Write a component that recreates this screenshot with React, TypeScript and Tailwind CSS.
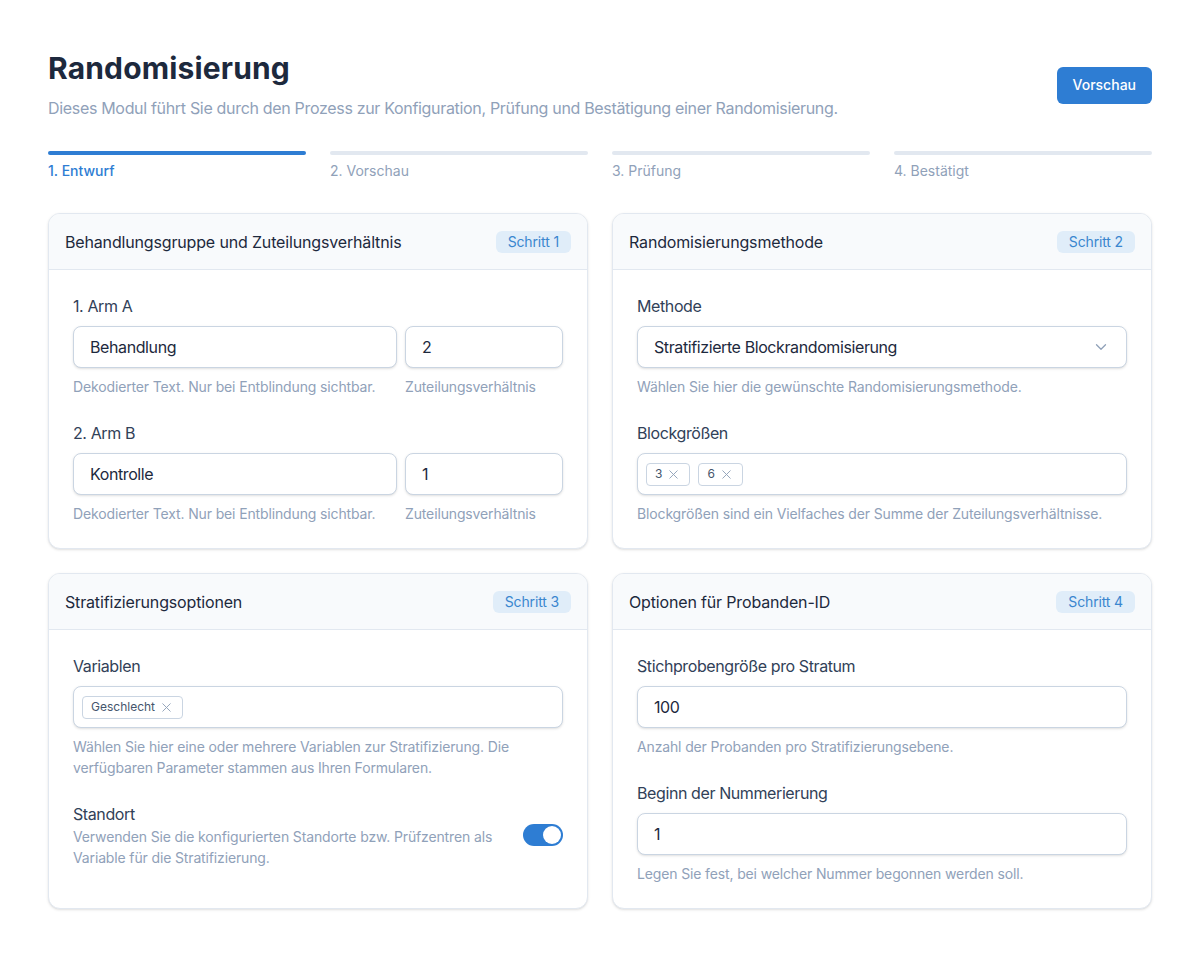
import React from 'react';
import { ChevronDown, X } from 'lucide-react';

const steps = ['1. Entwurf', '2. Vorschau', '3. Prüfung', '4. Bestätigt'];

const Card: React.FC<{ title: string; step: number; children: React.ReactNode }> = ({ title, step, children }) => (
  <div className="bg-white rounded-xl border border-slate-200 shadow-sm overflow-hidden">
    <div className="h-14 px-4 flex items-center justify-between bg-slate-50 border-b border-slate-200">
      <h2 className="text-base tracking-[-0.01em] text-slate-800">{title}</h2>
      <span className="px-3 h-[22px] flex items-center rounded-md bg-[#e0edf9] text-[#3a86cf] text-sm tracking-[-0.01em]">
        Schritt {step}
      </span>
    </div>
    <div className="px-6 pt-6 pb-6">{children}</div>
  </div>
);

const Label: React.FC<{ children: React.ReactNode; first?: boolean }> = ({ children, first }) => (
  <div className={`text-base leading-6 text-slate-700 ${first ? '' : 'mt-6'}`}>{children}</div>
);

const Help: React.FC<{ children: React.ReactNode }> = ({ children }) => (
  <p className="mt-2 text-sm leading-[21px] tracking-[-0.01em] text-slate-400">{children}</p>
);

const Field: React.FC<{ value: string; className?: string }> = ({ value, className = '' }) => (
  <div className={`h-[42px] px-4 flex items-center rounded-lg border border-slate-300 bg-white shadow-sm text-base text-slate-800 ${className}`}>
    {value}
  </div>
);

const Tag: React.FC<{ label: string }> = ({ label }) => (
  <span className="h-[23px] px-2 flex items-center gap-1 rounded border border-slate-300 bg-white text-xs tracking-normal text-slate-600">
    {label}
    <X size={15} strokeWidth={1.5} className="text-slate-400" />
  </span>
);

export default function App() {
  return (
    <div className="min-h-screen bg-white px-12 pt-[50px] pb-12 font-['Inter',sans-serif] tracking-[-0.025em]">
      <div className="flex items-center justify-between">
        <div>
          <h1 className="text-[30px] leading-9 font-bold tracking-[0.005em] text-slate-800">Randomisierung</h1>
          <p className="mt-2.5 text-base leading-6 tracking-[-0.02em] text-slate-400">
            Dieses Modul führt Sie durch den Prozess zur Konfiguration, Prüfung und Bestätigung einer Randomisierung.
          </p>
        </div>
        <button className="h-[37px] px-4 rounded-md bg-[#2e7dd3] text-white text-sm font-medium tracking-normal">Vorschau</button>
      </div>

      <div className="mt-[31px] grid grid-cols-4 gap-6">
        {steps.map((s, i) => (
          <div key={s}>
            <div className={`h-1 rounded-full ${i === 0 ? 'bg-[#2e7dd3]' : 'bg-slate-200'}`} />
            <div className={`mt-1.5 text-sm leading-5 tracking-normal ${i === 0 ? 'text-[#2e7dd3] font-medium' : 'text-slate-400'}`}>{s}</div>
          </div>
        ))}
      </div>

      <div className="mt-8 grid grid-cols-2 gap-6">
        <Card title="Behandlungsgruppe und Zuteilungsverhältnis" step={1}>
          {[['1. Arm A', 'Behandlung', '2'], ['2. Arm B', 'Kontrolle', '1']].map(([l, v, r], i) => (
            <div key={l}>
              <Label first={i === 0}>{l}</Label>
              <div className="mt-2 flex gap-2">
                <div className="flex-1">
                  <Field value={v} />
                  <Help>Dekodierter Text. Nur bei Entblindung sichtbar.</Help>
                </div>
                <div className="w-[158px]">
                  <Field value={r} />
                  <Help>Zuteilungsverhältnis</Help>
                </div>
              </div>
            </div>
          ))}
        </Card>

        <Card title="Randomisierungsmethode" step={2}>
          <Label first>Methode</Label>
          <div className="mt-2 h-[42px] px-4 flex items-center justify-between rounded-lg border border-slate-300 bg-white shadow-sm text-base text-slate-800">
            Stratifizierte Blockrandomisierung
            <ChevronDown size={18} strokeWidth={1.75} className="text-slate-400" />
          </div>
          <Help>Wählen Sie hier die gewünschte Randomisierungsmethode.</Help>
          <Label>Blockgrößen</Label>
          <div className="mt-2 h-[42px] px-2 flex items-center gap-2 rounded-lg border border-slate-300 bg-white shadow-sm">
            <Tag label="3" />
            <Tag label="6" />
          </div>
          <Help>Blockgrößen sind ein Vielfaches der Summe der Zuteilungsverhältnisse.</Help>
        </Card>

        <Card title="Stratifizierungsoptionen" step={3}>
          <Label first>Variablen</Label>
          <div className="mt-2 h-[42px] px-2 flex items-center gap-2 rounded-lg border border-slate-300 bg-white shadow-sm">
            <Tag label="Geschlecht" />
          </div>
          <Help>
            Wählen Sie hier eine oder mehrere Variablen zur Stratifizierung. Die verfügbaren Parameter stammen aus Ihren Formularen.
          </Help>
          <div className="mt-6 flex items-center gap-6">
            <div className="flex-1">
              <div className="text-base leading-6 text-slate-700">Standort</div>
              <p className="text-sm leading-[21px] tracking-[-0.01em] text-slate-400">
                Verwenden Sie die konfigurierten Standorte bzw. Prüfzentren als Variable für die Stratifizierung.
              </p>
            </div>
            <div className="w-10 h-[22px] rounded-full bg-[#2e7dd3] flex items-center justify-end px-[2px]">
              <div className="w-[18px] h-[18px] rounded-full bg-white" />
            </div>
          </div>
        </Card>

        <Card title="Optionen für Probanden-ID" step={4}>
          <Label first>Stichprobengröße pro Stratum</Label>
          <Field value="100" className="mt-2" />
          <Help>Anzahl der Probanden pro Stratifizierungsebene.</Help>
          <Label>Beginn der Nummerierung</Label>
          <Field value="1" className="mt-2" />
          <Help>Legen Sie fest, bei welcher Nummer begonnen werden soll.</Help>
        </Card>
      </div>
    </div>
  );
}
